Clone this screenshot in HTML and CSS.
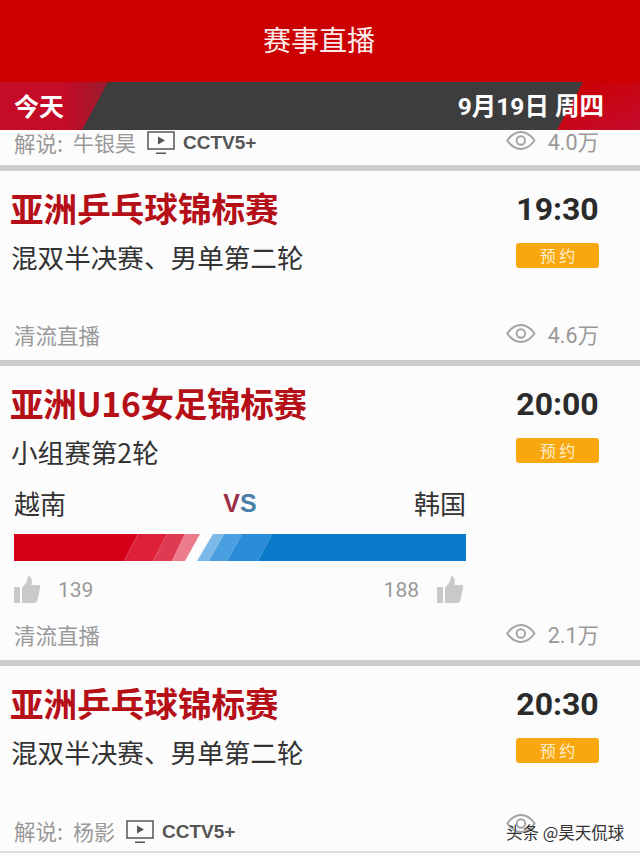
FILE: index.html
```html
<!DOCTYPE html>
<html lang="zh-CN">
  <head>
    <meta charset="UTF-8" />
    <meta name="viewport" content="width=device-width, initial-scale=1.0" />
    <title>赛事直播</title>
    <link rel="stylesheet" href="styles.css">
  </head>
  <body>
    <svg class="icon-defs" width="0" height="0">
      <symbol id="eye" viewBox="0 0 28 18">
        <path d="M1 9C5 3.500 9.500 1 14 1s9 2.500 13 8c-4 5.500-8.500 8-13 8S5 14.500 1 9z" fill="none" stroke="currentColor" stroke-width="1.800" />
        <circle cx="14" cy="9" r="4" fill="none" stroke="currentColor" stroke-width="1.800" />
      </symbol>
      <symbol id="tv" viewBox="0 0 28 24">
        <rect x="1" y="1" width="26" height="17" fill="none" stroke="currentColor" stroke-width="1.500" />
        <path d="M11 5.500l7 4-7 4z" fill="currentColor" />
        <rect x="9" y="21.500" width="10" height="1.500" fill="currentColor" />
      </symbol>
      <symbol id="thumb" viewBox="0 0 26 27">
        <rect x="0" y="11" width="6" height="16" fill="currentColor" />
        <path d="M8 11.500C12 8 13.500 5 14 0c3 0 4.500 3 3.500 9H25c1 0 1.500 1 1 3l-2.500 12c-.4 2-1.500 3-3.500 3H8z" fill="currentColor" />
      </symbol>
    </svg>

    <header class="top-bar">赛事直播</header>
    <div class="date-bar">
      <span class="date-today">今天</span>
      <span class="date-day">9月19日 周四</span>
    </div>

    <section class="match match-tail">
      <div class="foot">
        <div class="foot-left">
          <span>解说:</span><span class="name">牛银昊</span>
          <svg class="tv"><use href="#tv" /></svg>
          <b class="channel">CCTV5+</b>
        </div>
        <div class="views"><svg class="eye"><use href="#eye" /></svg>4.0万</div>
      </div>
    </section>

    <section class="match match-short">
      <div class="head">
        <div>
          <h2>亚洲乒乓球锦标赛</h2>
          <p class="round">混双半决赛、男单第二轮</p>
        </div>
        <div class="side">
          <div class="time">19:30</div>
          <div class="book">预 约</div>
        </div>
      </div>
      <div class="foot">
        <div class="foot-left"><span>清流直播</span></div>
        <div class="views"><svg class="eye"><use href="#eye" /></svg>4.6万</div>
      </div>
    </section>

    <section class="match match-vs">
      <div class="head">
        <div>
          <h2 class="title-tight">亚洲U16女足锦标赛</h2>
          <p class="round">小组赛第2轮</p>
        </div>
        <div class="side">
          <div class="time">20:00</div>
          <div class="book">预 约</div>
        </div>
      </div>
      <div class="versus">
        <div class="teams">
          <span>越南</span>
          <span class="vs"><i>V</i><em>S</em></span>
          <span>韩国</span>
        </div>
        <svg class="vote-bar" viewBox="0 0 452 27">
          <polygon points="0,0 124,0 110,27 0,27" fill="#d40017" />
          <polygon points="124,0 153,0 139,27 110,27" fill="#de2039" />
          <polygon points="153,0 171,0 158,27 139,27" fill="#e03a52" />
          <polygon points="171,0 186,0 171,27 158,27" fill="#ec7b8b" />
          <polygon points="199,0 210,0 195,27 183,27" fill="#7cb9e8" />
          <polygon points="210,0 228,0 213,27 195,27" fill="#4a9fe0" />
          <polygon points="228,0 258,0 244,27 213,27" fill="#2a8cd8" />
          <polygon points="258,0 452,0 452,27 244,27" fill="#0a7acb" />
        </svg>
        <div class="likes">
          <div class="like"><svg class="thumb"><use href="#thumb" /></svg>139</div>
          <div class="like like-right">188<svg class="thumb"><use href="#thumb" /></svg></div>
        </div>
      </div>
      <div class="foot">
        <div class="foot-left"><span>清流直播</span></div>
        <div class="views"><svg class="eye"><use href="#eye" /></svg>2.1万</div>
      </div>
    </section>

    <section class="match match-last">
      <div class="head">
        <div>
          <h2>亚洲乒乓球锦标赛</h2>
          <p class="round">混双半决赛、男单第二轮</p>
        </div>
        <div class="side">
          <div class="time">20:30</div>
          <div class="book">预 约</div>
        </div>
      </div>
      <div class="foot">
        <div class="foot-left">
          <span>解说:</span><span class="name">杨影</span>
          <svg class="tv"><use href="#tv" /></svg>
          <b class="channel">CCTV5+</b>
        </div>
        <div class="views"><svg class="eye"><use href="#eye" /></svg></div>
      </div>
    </section>

    <div class="watermark">头条 @昊天侃球</div>
  </body>
</html>
```

FILE: styles.css
```css
* {
  margin: 0;
  padding: 0;
  box-sizing: border-box;
}
html,
body {
  height: 856px;
  overflow: hidden;
}
body {
  position: relative;
  background: #fcfcfc;
  font-family: "Noto Sans CJK SC", "Noto Sans", sans-serif;
}
.icon-defs {
  position: absolute;
}
.top-bar {
  height: 82px;
  padding-right: 2px;
  background: #cc0000;
  color: #fbeaea;
  font-size: 28px;
  line-height: 78px;
  text-align: center;
}
.date-bar {
  position: relative;
  z-index: 0;
  display: flex;
  justify-content: space-between;
  align-items: center;
  height: 48px;
  padding: 0 36px 3px 14px;
  background: #3d3d3d;
  color: white;
  font-size: 25px;
  font-weight: bold;
}
.date-bar::before {
  content: "";
  position: absolute;
  z-index: -1;
  top: 0;
  left: 0;
  bottom: 0;
  width: 108px;
  background: linear-gradient(90deg, #c40b27 60%, #9c1c2e);
  clip-path: polygon(0 0, 100% 0, 82px 100%, 0 100%);
}
.date-bar::after {
  content: "";
  position: absolute;
  z-index: -1;
  top: 0;
  right: 0;
  bottom: 0;
  width: 83px;
  background: linear-gradient(160deg, #cc0000, #c40b2c);
  clip-path: polygon(26px 0, 100% 0, 100% 100%, 0 100%);
}
.date-day {
  font-family: Roboto, "Noto Sans CJK SC", sans-serif;
  font-size: 24.500px;
}
.match {
  display: flex;
  flex-direction: column;
  border-bottom: 6px solid #cdcdcd;
  padding: 0 41px 0 12px;
}
.match .foot {
  margin-top: auto;
}
.match-tail {
  height: 41px;
}
.match-short {
  height: 195px;
}
.match-vs {
  height: 300px;
}
.match-last {
  height: 187px;
  border-bottom-width: 2px;
  border-bottom-color: #e0e0e0;
}
.head {
  display: flex;
  justify-content: space-between;
  padding-top: 14px;
}
h2 {
  color: #b50f18;
  font-size: 33.600px;
  line-height: 46px;
  margin-left: -2px;
  white-space: nowrap;
}
.title-tight {
  letter-spacing: -0.300px;
}
.round {
  color: #333;
  font-size: 26.600px;
  line-height: 38px;
  margin-top: 7px;
  margin-left: -1px;
}
.side {
  width: 83px;
  padding-top: 2px;
  text-align: center;
}
.time {
  color: #2b2b2b;
  font-family: Roboto, sans-serif;
  font-size: 32px;
  font-weight: bold;
  line-height: 44px;
}
.book {
  height: 25px;
  margin-top: 12px;
  background: #f9a70f;
  border-radius: 3px;
  color: #fdeecb;
  font-size: 16px;
  line-height: 25px;
}
.foot {
  display: flex;
  justify-content: space-between;
  align-items: center;
  height: 40px;
  padding-left: 2px;
  padding-bottom: 11px;
  color: #999;
  font-size: 21.500px;
  white-space: nowrap;
}
.match-tail .foot {
  height: 35px;
  padding-bottom: 11px;
}
.match-last .foot {
  padding-bottom: 1px;
}
.foot-left {
  display: flex;
  align-items: center;
}
.name {
  margin-left: 10px;
  font-size: 21px;
}
.tv {
  width: 28px;
  height: 24px;
  margin: 2px 8px 0 11px;
  color: #555;
}
.channel {
  color: #555;
  font-family: "Liberation Sans", sans-serif;
  font-size: 19px;
  margin-top: 2px;
}
.views {
  display: flex;
  align-items: center;
  width: 93px;
  margin-top: -2px;
  font-family: Roboto, "Noto Sans CJK SC", sans-serif;
  font-size: 21.500px;
}
.match-tail .views {
  margin-top: -4px;
}
.match-last .views {
  margin-top: -14px;
}
.eye {
  width: 30px;
  height: 19px;
  margin-right: 12px;
  color: #a3a3a3;
}
.versus {
  width: 452px;
  margin: 14px 0 0 2px;
}
.teams {
  display: flex;
  justify-content: space-between;
  align-items: center;
  color: #333;
  font-size: 26px;
  line-height: 36px;
}
.vs {
  font-family: "Liberation Sans", sans-serif;
  font-size: 25px;
  font-weight: bold;
}
.vs i {
  color: #9c2f45;
  font-style: normal;
}
.vs em {
  color: #4a7fa8;
  font-style: normal;
}
.vote-bar {
  display: block;
  width: 452px;
  height: 27px;
  margin-top: 13px;
}
.likes {
  display: flex;
  justify-content: space-between;
  margin-top: 15px;
}
.like {
  display: flex;
  align-items: center;
  gap: 18px;
  color: #999;
  font-family: Roboto, sans-serif;
  font-size: 21px;
}
.like-right {
  margin-right: 3px;
}
.thumb {
  width: 26px;
  height: 27px;
  color: #c9c9c9;
}
.watermark {
  position: absolute;
  left: 506px;
  top: 820px;
  color: #333;
  font-size: 16.500px;
  line-height: 24px;
  white-space: nowrap;
  text-shadow: 0 0 1px white;
}
```
